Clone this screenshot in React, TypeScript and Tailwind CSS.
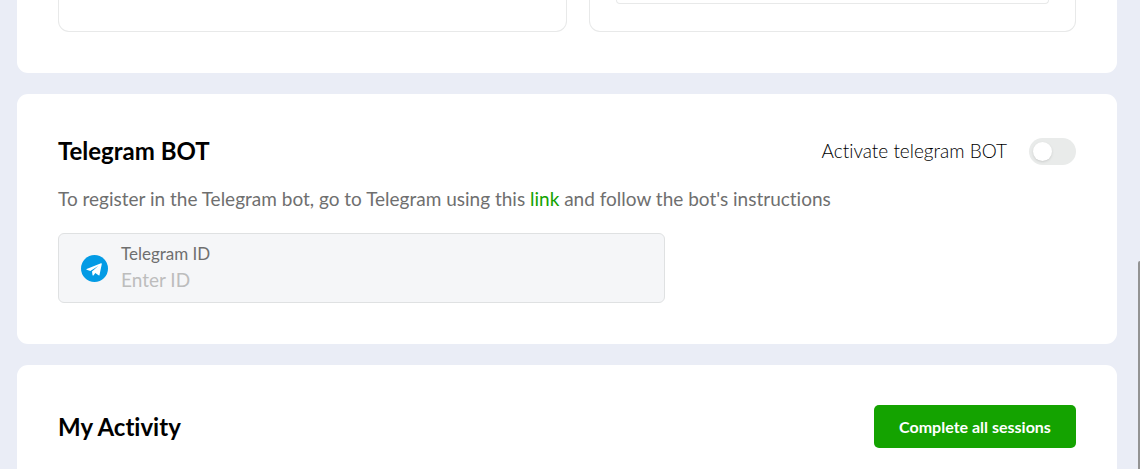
import { useState } from "react";

function TelegramIcon() {
  return (
    <svg viewBox="0 0 27 27" className="size-[27px] shrink-0" aria-hidden="true">
      <circle cx="13.5" cy="13.5" r="13.5" fill="#039be5" />
      <path
        fill="#fff"
        d="M5.6 13.9 20 8.3c.6-.2.9.1.8.7l-2.3 10.9c-.1.6-.5.7-1 .4l-3.2-2.4-1.6 2.4c-.4.5-1.1.4-1.2-.3l-.5-3.4 6.2-5.7-7.9 5-3.6-1.2c-.5-.2-.5-.6-.1-.8Z"
      />
    </svg>
  );
}

export default function App() {
  const [active, setActive] = useState(false);
  const [telegramId, setTelegramId] = useState("");

  return (
    <div className="relative flex min-h-screen flex-col bg-[#eaedf6] pr-[23px] pl-[17px] font-['Lato',sans-serif] text-black [font-variant-ligatures:none]">
      <main className="flex flex-1 flex-col gap-[21px]">
        <section className="grid grid-cols-[509fr_487fr] gap-[22px] rounded-b-[11px] bg-white px-[41px] pb-[41px]">
          <div className="h-8 rounded-b-[11px] border border-t-0 border-[#e8e9e9]" />
          <div className="h-8 rounded-b-[11px] border border-t-0 border-[#e8e9e9] px-[26px]">
            <div className="h-1 rounded-b-[5px] border border-t-0 border-[#e8e9e9]" />
          </div>
        </section>

        <section className="rounded-[11px] bg-white px-[41px] pt-[41px] pb-[41px]">
          <div className="flex items-center justify-between">
            <h2 className="text-[24px] leading-8 font-bold">Telegram BOT</h2>
            <label className="flex items-center gap-[22px] text-[19px] leading-8 font-light text-black">
              Activate telegram BOT
              <input
                type="checkbox"
                role="switch"
                checked={active}
                onChange={(e) => setActive(e.target.checked)}
                className="h-[27px] w-[47px] cursor-pointer appearance-none rounded-full bg-[#e9ebea] p-1 before:block before:size-[19px] before:rounded-full before:bg-white before:shadow-sm checked:bg-[#14a300] checked:before:ml-5"
              />
            </label>
          </div>
          <p className="mt-[18px] text-[19px] leading-7 text-[#6f6f6f]">
            To register in the Telegram bot, go to Telegram using this{" "}
            <a href="#telegram" className="text-[#14a300]">link</a> and follow the bot's instructions
          </p>
          <div className="mt-5 flex h-[70px] max-w-[607px] items-center gap-[13px] rounded-md border border-[#dfe1e2] bg-[#f5f6f8] px-[22px]">
            <TelegramIcon />
            <div className="flex flex-1 flex-col">
              <label htmlFor="telegram-id" className="text-[17px] leading-6 text-[#6f6f6f]">
                Telegram ID
              </label>
              <input
                id="telegram-id"
                type="text"
                placeholder="Enter ID"
                value={telegramId}
                onChange={(e) => setTelegramId(e.target.value)}
                className="h-7 w-full bg-transparent text-[19px] outline-none placeholder:text-[#bdbdbd]"
              />
            </div>
          </div>
        </section>

        <section className="flex-1 rounded-t-[11px] bg-white px-[41px] pt-10 pb-5">
          <div className="flex items-center justify-between">
            <h2 className="text-[24px] leading-8 font-bold">My Activity</h2>
            <button
              type="button"
              className="h-[43px] w-[202px] cursor-pointer rounded-[5px] bg-[#14a300] text-[16px] font-bold text-white"
            >
              Complete all sessions
            </button>
          </div>
        </section>
      </main>
      <div className="absolute top-[261px] right-0 bottom-0 w-[2px] rounded-tl-sm bg-[#939393]" />
    </div>
  );
}
